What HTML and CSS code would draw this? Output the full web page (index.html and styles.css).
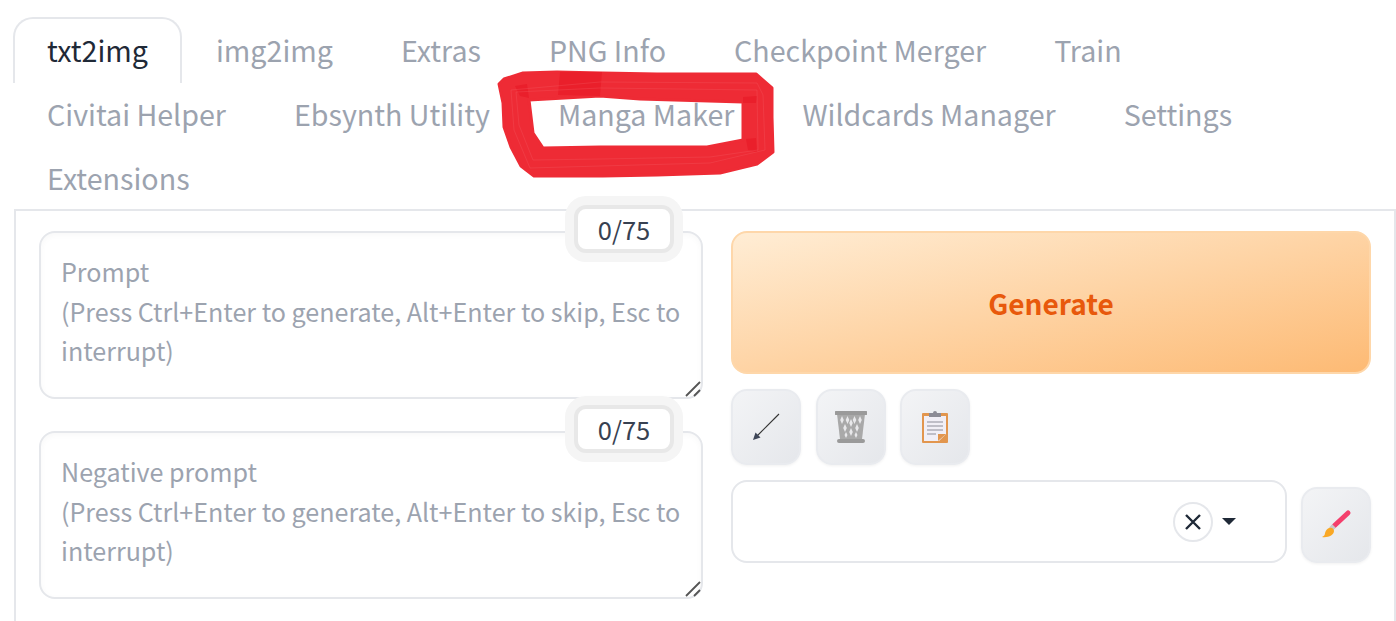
FILE: index.html
```html
<!DOCTYPE html>
<html lang="en">
<head>
<meta charset="utf-8">
<title>Stable Diffusion web UI</title>
<link rel="stylesheet" href="styles.css">
</head>
<body>
<nav class="tabs">
  <button class="tab active">txt2img</button>
  <button class="tab">img2img</button>
  <button class="tab">Extras</button>
  <button class="tab">PNG Info</button>
  <button class="tab">Checkpoint Merger</button>
  <button class="tab">Train</button>
  <button class="tab">Civitai Helper</button>
  <button class="tab">Ebsynth Utility</button>
  <button class="tab">Manga Maker</button>
  <button class="tab">Wildcards Manager</button>
  <button class="tab">Settings</button>
  <button class="tab">Extensions</button>
</nav>
<main class="panel">
  <section class="prompts">
    <div class="prompt">
      <textarea class="prompt-input" placeholder="Prompt&#10;(Press Ctrl+Enter to generate, Alt+Enter to skip, Esc to interrupt)"></textarea>
      <div class="counter">0/75</div>
      <svg class="grip" viewBox="0 0 16 16"><path d="M1 15 15 1M9 15l6-6" /></svg>
    </div>
    <div class="prompt">
      <textarea class="prompt-input" placeholder="Negative prompt&#10;(Press Ctrl+Enter to generate, Alt+Enter to skip, Esc to interrupt)"></textarea>
      <div class="counter">0/75</div>
      <svg class="grip" viewBox="0 0 16 16"><path d="M1 15 15 1M9 15l6-6" /></svg>
    </div>
  </section>
  <section class="actions">
    <button class="generate">Generate</button>
    <div class="tools">
      <button class="tool" aria-label="Read parameters">
        <svg class="icon" viewBox="0 0 32 32"><path class="arrow-line" d="M29 3 5 27" /><path class="arrow-head" d="M3 29l2.500-7.500 5 5z" /></svg>
      </button>
      <button class="tool" aria-label="Clear prompt">
        <svg class="icon" viewBox="0 0 32 32">
          <path class="bin-body" d="M2 3h28l-3 25H5z" />
          <path class="bin-mesh" d="M7 5l1.800 4-1.800 4-1.800-4zM12.500 5l1.800 4-1.800 4-1.800-4zM19.500 5l1.800 4-1.800 4-1.800-4zM25 5l1.800 4-1.800 4-1.800-4zM16 8l1.800 4-1.800 4-1.800-4zM10 13l1.800 4-1.800 4-1.800-4zM22 13l1.800 4-1.800 4-1.800-4zM16 17l1.800 4-1.800 4-1.800-4zM11 21l1.500 3-1.500 3-1.500-3zM21 21l1.500 3-1.500 3-1.500-3z" />
          <path class="bin-rim" d="M1 0h30a1 1 0 0 1 0 4H1a1 1 0 0 1 0-4zM4 28h24a2 2 0 0 1 0 4H4a2 2 0 0 1 0-4z" />
        </svg>
      </button>
      <button class="tool" aria-label="Apply style">
        <svg class="icon" viewBox="0 0 32 32">
          <rect class="clip-board" x="3" y="2" width="26" height="30" rx="1" />
          <path class="clip-paper" d="M5 5h22v18l-7 7H5z" />
          <path class="clip-fold" d="M19 30v-7h8z" />
          <path class="clip-lines" d="M8 11h16M8 15h16M8 19h16M8 23h9" />
          <path class="clip-tab" d="M10 2h4a2 2 0 0 1 4 0h4v4H10z" />
        </svg>
      </button>
    </div>
    <div class="style-row">
      <div class="dropdown">
        <span class="clear">
          <svg class="clear-x" viewBox="0 0 16 16"><path d="M1 1l14 14M15 1 1 15" /></svg>
        </span>
        <span class="caret"></span>
      </div>
      <button class="tool" aria-label="Edit styles">
        <svg class="icon" viewBox="0 0 32 32">
          <path class="brush-handle" d="M28 4 14 17" />
          <path class="brush-ferrule" d="M14 17l-3 3" />
          <path class="brush-tip" d="M9 19c3-1 5 1 5 3 0 4-6 7-12 6 2-1 3-2 3-4 1-3 2-4 4-5z" />
        </svg>
      </button>
    </div>
  </section>
</main>
<svg class="scribble" viewBox="0 0 1396 621">
  <path class="ink" d="M499 84 504 79 523 73 557 72 602 73 657 74 756 74 772 88 772 117 773 152 757 164 720 173 657 175 603 176 534 176 521 166 511 147 504 127 503 103ZM529 100 533 133 543 148 600 147 707 147 743 140 743 102 640 99 600 96Z" />
  <path class="ink-dark" d="M515 86 527 84 529 98 520 96ZM743 97 757 96 756 103 743 103ZM746 139 756 138 757 152 748 150ZM560 72 602 72 600 96 558 95Z" />
  <path class="streak" d="M511 90 600 82 757 83 763 95 765 150 710 163 600 166 530 168 514 130ZM516 92 600 88 757 90 758 150 710 157 600 159 533 160 519 125Z" />
</svg>
</body>
</html>
```
FILE: styles.css
```css
* { box-sizing: border-box; }
html, body { margin: 0; height: 621px; overflow: hidden; background: #fff; }
body {
  position: relative;
  padding: 17px 0 0 14px;
  font-family: "Noto Sans CJK SC", "Noto Sans", sans-serif;
  color: #1f2937;
}
button { font-family: inherit; background: none; border: 0; padding: 0; }

.tabs { display: flex; flex-wrap: wrap; height: 192px; margin-left: -1px; align-content: flex-start; }
.tab {
  height: 64px;
  padding: 0 32px 2px;
  font-size: 28.640px;
  line-height: 62px;
  color: #9ca3af;
  border: 2px solid transparent;
  border-bottom: 0;
  white-space: nowrap;
}
.active {
  color: #1f2937;
  height: 66px;
  margin-bottom: -2px;
  padding-bottom: 4px;
  border-color: #e5e7eb;
  border-radius: 20px 20px 0 0;
}

.panel {
  display: flex;
  gap: 28px;
  height: 420px;
  padding: 20px 23px 0 23px;
  border: 2px solid #e5e7eb;
  border-bottom: 0;
}
.prompts { display: flex; flex-direction: column; gap: 32px; width: 664px; flex: none; }
.prompt { position: relative; height: 168px; }
.prompt-input {
  display: block;
  width: 100%;
  height: 100%;
  padding: 19px 20px;
  font: 25.080px/39.500px "Noto Sans CJK SC", "Noto Sans", sans-serif;
  color: #1f2937;
  border: 2px solid #e5e7eb;
  border-radius: 16px;
  box-shadow: inset 0 2px 6px rgba(0, 0, 0, 0.03);
  outline: 0;
  resize: none;
  overflow: hidden;
}
.prompt-input::placeholder { color: #9ca3af; opacity: 1; }
.counter {
  position: absolute;
  top: -26px;
  right: 29px;
  width: 100px;
  height: 48px;
  font-size: 25.500px;
  line-height: 40px;
  text-align: center;
  color: #374151;
  background: #fff;
  border: 4px solid #e8e8e8;
  border-radius: 12px;
  box-shadow: 0 0 0 9px #f5f5f5;
}
.grip {
  position: absolute;
  right: 2px;
  bottom: 2px;
  width: 16px;
  height: 16px;
  fill: none;
  stroke: #555;
  stroke-width: 1.800;
}

.actions { display: flex; flex-direction: column; width: 640px; flex: none; }
.generate {
  height: 143px;
  flex: none;
  font-size: 28px;
  font-weight: 700;
  color: #e8590c;
  background: linear-gradient(to bottom right, #ffedd5, #fdba74);
  border: 2px solid #fed7aa;
  border-radius: 16px;
}
.tools { display: flex; gap: 14.500px; margin-top: 15px; }
.tool {
  display: flex;
  align-items: center;
  justify-content: center;
  width: 70px;
  height: 76px;
  flex: none;
  background: linear-gradient(to bottom right, #f3f4f6, #e5e7eb);
  border: 2px solid #e9ebef;
  border-radius: 16px;
  box-shadow: 0 1px 3px rgba(0, 0, 0, 0.06);
}
.icon { width: 32px; height: 32px; }
.arrow-line { stroke: #333; stroke-width: 1.100; }
.arrow-head { fill: #3e4658; }
.bin-rim { fill: #9a9a9a; }
.bin-body { fill: #a9a9a9; }
.bin-mesh { fill: #e8e8ea; }
.clip-board { fill: #e2964e; }
.clip-paper { fill: #f1eff6; }
.clip-fold { fill: #e2964e; }
.clip-lines { fill: none; stroke: #8d8d98; stroke-width: 1.200; }
.clip-tab { fill: #8c8c96; }
.brush-handle { stroke: #f43f6c; stroke-width: 5; stroke-linecap: round; fill: none; }
.brush-ferrule { stroke: #c9c9c9; stroke-width: 5; fill: none; }
.brush-tip { fill: #f9a825; }

.style-row { display: flex; align-items: flex-end; gap: 14px; margin-top: 15px; }
.dropdown {
  display: flex;
  align-items: center;
  justify-content: flex-end;
  gap: 9px;
  width: 557px;
  height: 83px;
  padding-right: 49px;
  border: 2px solid #e5e7eb;
  border-radius: 16px;
}
.clear {
  display: flex;
  align-items: center;
  justify-content: center;
  width: 40px;
  height: 40px;
  border: 2px solid #e5e7eb;
  border-radius: 50%;
}
.clear-x { width: 16px; height: 16px; fill: none; stroke: #1f2937; stroke-width: 2.400; }
.caret {
  width: 0;
  height: 0;
  border: 7px solid transparent;
  border-top: 7px solid #1f2937;
  border-bottom: 0;
}

.scribble {
  position: absolute;
  left: 0;
  top: 0;
  width: 1396px;
  height: 621px;
  pointer-events: none;
}
.ink { fill: #ee2b35; fill-rule: evenodd; stroke: #ee2b35; stroke-width: 3; stroke-linejoin: round; }
.ink-dark { fill: #ea1f2b; }
.streak { fill: none; stroke: #f4636a; stroke-width: 0.800; stroke-opacity: 0.35; }
```
